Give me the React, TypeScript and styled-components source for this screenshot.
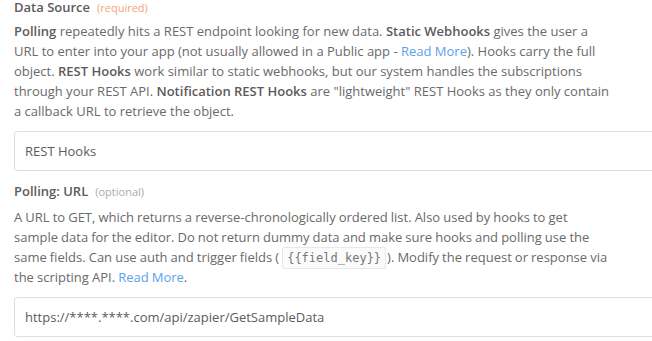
import styled, { createGlobalStyle } from "styled-components";

const GlobalStyle = createGlobalStyle`
  html, body {
    margin: 0;
    padding: 0;
    background: #fff;
    overflow: hidden;
  }
  body {
    font-family: "Open Sans", "Liberation Sans", sans-serif;
  }
`;

const Page = styled.div`
  width: 690px;
  padding: 0 0 0 14px;
`;

const Field = styled.div<{ $first?: boolean }>`
  display: flex;
  flex-direction: column;
  margin-top: ${p => (p.$first ? "0" : "13px")};
`;

const Label = styled.div`
  font-size: 13px;
  font-weight: 600;
  color: #5b5b5b;
  line-height: 14px;
  white-space: nowrap;
`;

const Tag = styled.span<{ $required?: boolean }>`
  font-size: 11px;
  font-weight: 400;
  margin-left: 7px;
  color: ${p => (p.$required ? "#f5a47a" : "#aaaaaa")};
`;

const Help = styled.p<{ $gap: number; $tight?: boolean }>`
  margin: ${p => p.$gap}px 0 0;
  max-width: ${p => (p.$tight ? "600px" : "598px")};
  font-size: 13px;
  line-height: 20px;
  color: #6a6a6a;
  word-spacing: ${p => (p.$tight ? "-0.3px" : "normal")};

  b {
    font-weight: 600;
    color: #5b5b5b;
  }
`;

const Link = styled.a`
  color: #5aa2ec;
  text-decoration: none;
`;

const Code = styled.code`
  font-family: "DejaVu Sans Mono", "Liberation Mono", monospace;
  font-size: 12px;
  line-height: 1;
  color: #777;
  background: #fbfbfb;
  border: 1px solid #e8e8e8;
  border-radius: 2px;
  padding: 3px 4px;
  margin: 0 1px 0 3px;
`;

const Input = styled.div`
  box-sizing: border-box;
  height: 40px;
  border: 1px solid #dedede;
  border-radius: 3px;
  padding: 0 10px;
  display: flex;
  align-items: center;
  font-size: 13px;
  color: #5b5b5b;
  margin-top: 10px;
`;

export default function App() {
  return (
    <Page>
      <GlobalStyle />
      <Field $first>
        <Label>
          Data Source<Tag $required>(required)</Tag>
        </Label>
        <Help $gap={6}>
          <b>Polling</b> repeatedly hits a REST endpoint looking for new data. <b>Static Webhooks</b> gives the user a
          URL to enter into your app (not usually allowed in a Public app - <Link>Read More</Link>). Hooks carry the full
          object. <b>REST Hooks</b> work similar to static webhooks, but our system handles the subscriptions through your
          REST API. <b>Notification REST Hooks</b> are "lightweight" REST Hooks as they only contain a callback URL to
          retrieve the object.
        </Help>
        <Input>REST Hooks</Input>
      </Field>
      <Field>
        <Label>
          Polling: URL<Tag>(optional)</Tag>
        </Label>
        <Help $gap={8} $tight>
          A URL to GET, which returns a reverse-chronologically ordered list. Also used by hooks to get sample data for
          the editor. Do not return dummy data and make sure hooks and polling use the same fields. Can use auth and
          trigger fields (<Code>{"{{field_key}}"}</Code>). Modify the request or response via the scripting API.{" "}
          <Link>Read More</Link>.
        </Help>
        <Input>https://****.****.com/api/zapier/GetSampleData</Input>
      </Field>
    </Page>
  );
}
